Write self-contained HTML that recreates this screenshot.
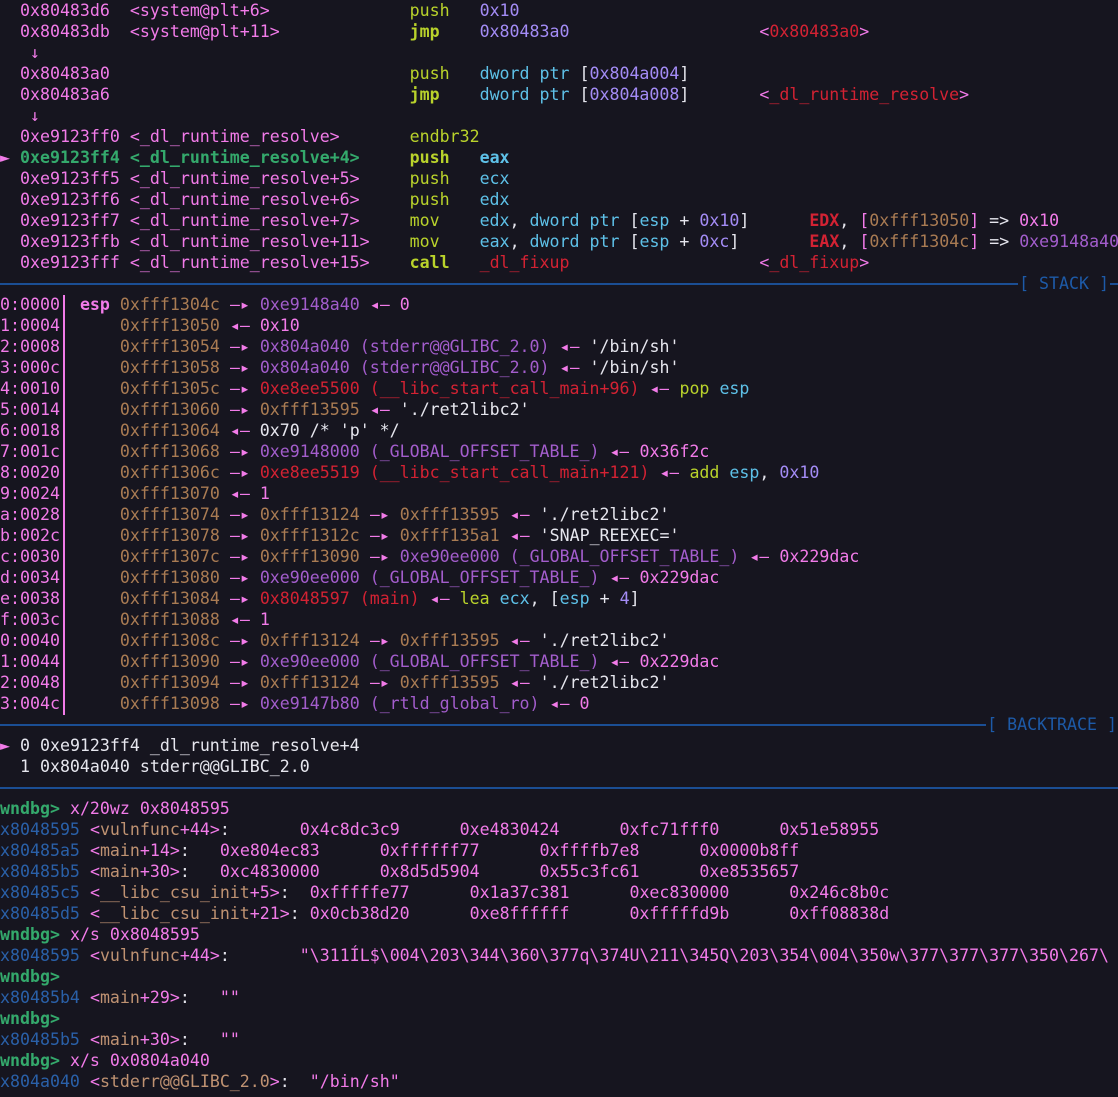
<!DOCTYPE html>
<html><head><meta charset="utf-8"><style>
html,body{margin:0;padding:0;background:#16151f;width:1118px;height:1097px;overflow:hidden}
#t{position:absolute;left:0;top:0;width:1118px;font-family:"DejaVu Sans Mono","Liberation Mono",monospace;font-size:16.6px;line-height:21px;color:#e6e6ee}
.r0{height:21px;overflow:hidden;white-space:pre}
i{font-style:normal;display:inline-block;width:10px;text-align:center;overflow:hidden;vertical-align:top;font-family:"DejaVu Sans Mono",monospace}
.p{color:#f27be9}.g{color:#34a96c}.y{color:#b9d22b}.l{color:#a48cf6}.c{color:#5ec1e8}.r{color:#d32233}.b{color:#a97b53}.v{color:#a35dcc}.w{color:#e6e6ee}.bl{color:#2a60a8}.t{color:#bf9272}.B{font-weight:bold}
.sep{display:flex;align-items:center;height:21px;white-space:pre}
.sep .ln{flex:1;height:2px;background:#1b4e94}
.sep .lb{color:#1d5aa8;padding:0 1px}
.sep .e{width:8px;height:2px;background:#1b4e94}
#bar{position:absolute;left:63px;top:295px;width:2px;height:420px;background:#f27be9}
</style></head><body>
<div id="t">
<div class="r0">  <span class="p">0x80483d6  &lt;system@plt+6&gt;</span>              <span class="y">push</span>   <span class="l">0x10</span></div>
<div class="r0">  <span class="p">0x80483db  &lt;system@plt+11&gt;</span>             <span class="y B">jmp</span>    <span class="l">0x80483a0</span>                   <span class="p">&lt;</span><span class="r">0x80483a0</span><span class="p">&gt;</span></div>
<div class="r0">   <i class="p">↓</i></div>
<div class="r0">  <span class="p">0x80483a0</span>                              <span class="y">push</span>   <span class="c">dword ptr</span> [<span class="l">0x804a004</span>]</div>
<div class="r0">  <span class="p">0x80483a6</span>                              <span class="y B">jmp</span>    <span class="c">dword ptr</span> [<span class="l">0x804a008</span>]       <span class="p">&lt;</span><span class="r">_dl_runtime_resolve</span><span class="p">&gt;</span></div>
<div class="r0">   <i class="p">↓</i></div>
<div class="r0">  <span class="p">0xe9123ff0 &lt;_dl_runtime_resolve&gt;</span>       <span class="y">endbr32</span></div>
<div class="r0"><i class="p">►</i> <span class="g B">0xe9123ff4 &lt;_dl_runtime_resolve+4&gt;</span>     <span class="y B">push</span>   <span class="c B">eax</span></div>
<div class="r0">  <span class="p">0xe9123ff5 &lt;_dl_runtime_resolve+5&gt;</span>     <span class="y">push</span>   <span class="c">ecx</span></div>
<div class="r0">  <span class="p">0xe9123ff6 &lt;_dl_runtime_resolve+6&gt;</span>     <span class="y">push</span>   <span class="c">edx</span></div>
<div class="r0">  <span class="p">0xe9123ff7 &lt;_dl_runtime_resolve+7&gt;</span>     <span class="y">mov</span>    <span class="c">edx</span>, <span class="c">dword ptr</span> [<span class="c">esp</span> + <span class="l">0x10</span>]      <span class="r B">EDX</span>, <span class="p">[</span><span class="b">0xfff13050</span><span class="p">]</span> =&gt; <span class="p">0x10</span></div>
<div class="r0">  <span class="p">0xe9123ffb &lt;_dl_runtime_resolve+11&gt;</span>    <span class="y">mov</span>    <span class="c">eax</span>, <span class="c">dword ptr</span> [<span class="c">esp</span> + <span class="l">0xc</span>]       <span class="r B">EAX</span>, <span class="p">[</span><span class="b">0xfff1304c</span><span class="p">]</span> =&gt; <span class="v">0xe9148a40</span></div>
<div class="r0">  <span class="p">0xe9123fff &lt;_dl_runtime_resolve+15&gt;</span>    <span class="y B">call</span>   <span class="r">_dl_fixup</span>                   <span class="p">&lt;</span><span class="r">_dl_fixup</span><span class="p">&gt;</span></div>
<div class="sep"><div class="ln"></div><span class="lb">[ STACK ]</span><div class="e"></div></div>
<div class="r0"><span class="p">0:0000</span>  <span class="p B">esp</span> <span class="b">0xfff1304c</span> <span class="p"><i>—</i><i>▸</i></span> <span class="v">0xe9148a40</span> <span class="p"><i>◂</i><i>—</i></span> <span class="p">0</span></div>
<div class="r0"><span class="p">1:0004</span>      <span class="b">0xfff13050</span> <span class="p"><i>◂</i><i>—</i></span> <span class="p">0x10</span></div>
<div class="r0"><span class="p">2:0008</span>      <span class="b">0xfff13054</span> <span class="p"><i>—</i><i>▸</i></span> <span class="v">0x804a040 (stderr@@GLIBC_2.0)</span> <span class="p"><i>◂</i><i>—</i></span> '/bin/sh'</div>
<div class="r0"><span class="p">3:000c</span>      <span class="b">0xfff13058</span> <span class="p"><i>—</i><i>▸</i></span> <span class="v">0x804a040 (stderr@@GLIBC_2.0)</span> <span class="p"><i>◂</i><i>—</i></span> '/bin/sh'</div>
<div class="r0"><span class="p">4:0010</span>      <span class="b">0xfff1305c</span> <span class="p"><i>—</i><i>▸</i></span> <span class="r">0xe8ee5500 (__libc_start_call_main+96)</span> <span class="p"><i>◂</i><i>—</i></span> <span class="y">pop</span> <span class="c">esp</span></div>
<div class="r0"><span class="p">5:0014</span>      <span class="b">0xfff13060</span> <span class="p"><i>—</i><i>▸</i></span> <span class="b">0xfff13595</span> <span class="p"><i>◂</i><i>—</i></span> './ret2libc2'</div>
<div class="r0"><span class="p">6:0018</span>      <span class="b">0xfff13064</span> <span class="p"><i>◂</i><i>—</i></span> 0x70 /* 'p' */</div>
<div class="r0"><span class="p">7:001c</span>      <span class="b">0xfff13068</span> <span class="p"><i>—</i><i>▸</i></span> <span class="v">0xe9148000 (_GLOBAL_OFFSET_TABLE_)</span> <span class="p"><i>◂</i><i>—</i></span> <span class="p">0x36f2c</span></div>
<div class="r0"><span class="p">8:0020</span>      <span class="b">0xfff1306c</span> <span class="p"><i>—</i><i>▸</i></span> <span class="r">0xe8ee5519 (__libc_start_call_main+121)</span> <span class="p"><i>◂</i><i>—</i></span> <span class="y">add</span> <span class="c">esp</span>, <span class="l">0x10</span></div>
<div class="r0"><span class="p">9:0024</span>      <span class="b">0xfff13070</span> <span class="p"><i>◂</i><i>—</i></span> <span class="p">1</span></div>
<div class="r0"><span class="p">a:0028</span>      <span class="b">0xfff13074</span> <span class="p"><i>—</i><i>▸</i></span> <span class="b">0xfff13124</span> <span class="p"><i>—</i><i>▸</i></span> <span class="b">0xfff13595</span> <span class="p"><i>◂</i><i>—</i></span> './ret2libc2'</div>
<div class="r0"><span class="p">b:002c</span>      <span class="b">0xfff13078</span> <span class="p"><i>—</i><i>▸</i></span> <span class="b">0xfff1312c</span> <span class="p"><i>—</i><i>▸</i></span> <span class="b">0xfff135a1</span> <span class="p"><i>◂</i><i>—</i></span> 'SNAP_REEXEC='</div>
<div class="r0"><span class="p">c:0030</span>      <span class="b">0xfff1307c</span> <span class="p"><i>—</i><i>▸</i></span> <span class="b">0xfff13090</span> <span class="p"><i>—</i><i>▸</i></span> <span class="v">0xe90ee000 (_GLOBAL_OFFSET_TABLE_)</span> <span class="p"><i>◂</i><i>—</i></span> <span class="p">0x229dac</span></div>
<div class="r0"><span class="p">d:0034</span>      <span class="b">0xfff13080</span> <span class="p"><i>—</i><i>▸</i></span> <span class="v">0xe90ee000 (_GLOBAL_OFFSET_TABLE_)</span> <span class="p"><i>◂</i><i>—</i></span> <span class="p">0x229dac</span></div>
<div class="r0"><span class="p">e:0038</span>      <span class="b">0xfff13084</span> <span class="p"><i>—</i><i>▸</i></span> <span class="r">0x8048597 (main)</span> <span class="p"><i>◂</i><i>—</i></span> <span class="y">lea</span> <span class="c">ecx</span>, [<span class="c">esp</span> + <span class="l">4</span>]</div>
<div class="r0"><span class="p">f:003c</span>      <span class="b">0xfff13088</span> <span class="p"><i>◂</i><i>—</i></span> <span class="p">1</span></div>
<div class="r0"><span class="p">0:0040</span>      <span class="b">0xfff1308c</span> <span class="p"><i>—</i><i>▸</i></span> <span class="b">0xfff13124</span> <span class="p"><i>—</i><i>▸</i></span> <span class="b">0xfff13595</span> <span class="p"><i>◂</i><i>—</i></span> './ret2libc2'</div>
<div class="r0"><span class="p">1:0044</span>      <span class="b">0xfff13090</span> <span class="p"><i>—</i><i>▸</i></span> <span class="v">0xe90ee000 (_GLOBAL_OFFSET_TABLE_)</span> <span class="p"><i>◂</i><i>—</i></span> <span class="p">0x229dac</span></div>
<div class="r0"><span class="p">2:0048</span>      <span class="b">0xfff13094</span> <span class="p"><i>—</i><i>▸</i></span> <span class="b">0xfff13124</span> <span class="p"><i>—</i><i>▸</i></span> <span class="b">0xfff13595</span> <span class="p"><i>◂</i><i>—</i></span> './ret2libc2'</div>
<div class="r0"><span class="p">3:004c</span>      <span class="b">0xfff13098</span> <span class="p"><i>—</i><i>▸</i></span> <span class="v">0xe9147b80 (_rtld_global_ro)</span> <span class="p"><i>◂</i><i>—</i></span> <span class="p">0</span></div>
<div class="sep"><div class="ln"></div><span class="lb">[ BACKTRACE ]</span></div>
<div class="r0"><i class="p">►</i> 0 0xe9123ff4 _dl_runtime_resolve+4</div>
<div class="r0">  1 0x804a040 stderr@@GLIBC_2.0</div>
<div class="sep"><div class="ln"></div></div>
<div class="r0"><span class="g B">wndbg&gt;</span> <span class="p">x/20wz 0x8048595</span></div>
<div class="r0"><span class="bl">x8048595</span> <span class="p">&lt;</span><span class="t">vulnfunc</span><span class="p">+44&gt;</span>:       <span class="p">0x4c8dc3c9      0xe4830424      0xfc71fff0      0x51e58955</span></div>
<div class="r0"><span class="bl">x80485a5</span> <span class="p">&lt;</span><span class="t">main</span><span class="p">+14&gt;</span>:   <span class="p">0xe804ec83      0xffffff77      0xffffb7e8      0x0000b8ff</span></div>
<div class="r0"><span class="bl">x80485b5</span> <span class="p">&lt;</span><span class="t">main</span><span class="p">+30&gt;</span>:   <span class="p">0xc4830000      0x8d5d5904      0x55c3fc61      0xe8535657</span></div>
<div class="r0"><span class="bl">x80485c5</span> <span class="p">&lt;</span><span class="t">__libc_csu_init</span><span class="p">+5&gt;</span>:  <span class="p">0xfffffe77      0x1a37c381      0xec830000      0x246c8b0c</span></div>
<div class="r0"><span class="bl">x80485d5</span> <span class="p">&lt;</span><span class="t">__libc_csu_init</span><span class="p">+21&gt;</span>: <span class="p">0x0cb38d20      0xe8ffffff      0xfffffd9b      0xff08838d</span></div>
<div class="r0"><span class="g B">wndbg&gt;</span> <span class="p">x/s 0x8048595</span></div>
<div class="r0"><span class="bl">x8048595</span> <span class="p">&lt;</span><span class="t">vulnfunc</span><span class="p">+44&gt;</span>:       <span class="p">"\311ÍL$\004\203\344\360\377q\374U\211\345Q\203\354\004\350w\377\377\377\350\267\</span></div>
<div class="r0"><span class="g B">wndbg&gt;</span></div>
<div class="r0"><span class="bl">x80485b4</span> <span class="p">&lt;</span><span class="t">main</span><span class="p">+29&gt;</span>:   <span class="p">""</span></div>
<div class="r0"><span class="g B">wndbg&gt;</span></div>
<div class="r0"><span class="bl">x80485b5</span> <span class="p">&lt;</span><span class="t">main</span><span class="p">+30&gt;</span>:   <span class="p">""</span></div>
<div class="r0"><span class="g B">wndbg&gt;</span> <span class="p">x/s 0x0804a040</span></div>
<div class="r0"><span class="bl">x804a040</span> <span class="p">&lt;</span><span class="t">stderr@@GLIBC_2.0</span><span class="p">&gt;</span>:  <span class="p">"/bin/sh"</span></div>
</div>
<div id="bar"></div>
</body></html>
